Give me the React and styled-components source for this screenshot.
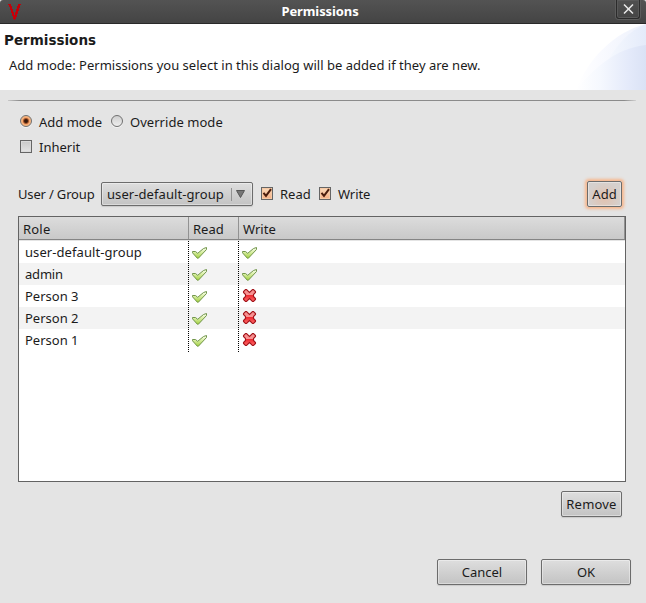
import React from "react";
import styled, { createGlobalStyle, css } from "styled-components";

const Global = createGlobalStyle`
  * { box-sizing: border-box; }
  body { margin: 0; overflow: hidden; background: #e4e4e4; }
  svg { display: block; }
`;

const Dialog = styled.main`
  width: 646px;
  height: 603px;
  display: flex;
  flex-direction: column;
  background: #e4e4e4;
  color: #1b1b1b;
  font: 13px/22px "Noto Sans", "Open Sans", sans-serif;
`;

const Text = styled.span`
  display: block;
  white-space: nowrap;
  letter-spacing: ${(p) => p.$track || 0}px;
`;

const TitleBar = styled.header`
  flex: none;
  height: 24px;
  display: grid;
  grid-template-columns: 32px 1fr 30px;
  background: linear-gradient(#535353, #444);
  border-bottom: 1px solid #292929;
  border-top-left-radius: 3px;
  border-top-right-radius: 3px;
`;

const Title = styled.h1`
  margin: 0;
  padding-right: 8px;
  text-align: center;
  color: #fff;
  font-size: 13px;
  line-height: 23px;
  letter-spacing: -0.1px;
`;

const CloseButton = styled.button`
  width: 24px;
  height: 19px;
  padding: 4px 0 0 6px;
  border: 1px solid #2b2b2b;
  border-top: 0;
  border-radius: 0 0 3px 3px;
  background: linear-gradient(#505050, #454545);
  box-shadow: 0 0 0 1px #5c5c5c, inset 0 0 0 1px #595959;
  display: flex;
  align-items: flex-start;
`;

const Banner = styled.section`
  flex: none;
  height: 66px;
  display: grid;
  grid-template-columns: 1fr 70px;
  background: #fff;
`;

const BannerCopy = styled.div`
  padding: 6px 0 0 4px;
`;

const Heading = styled.h2`
  margin: 0 0 5px;
  font: bold 13.5px/20px "DejaVu Sans", sans-serif;
`;

const Description = styled(Text)`
  margin-left: 5px;
  line-height: 20px;
`;

const Rule = styled.hr`
  flex: none;
  width: 628px;
  height: 1px;
  margin: 10px 8px 0;
  border: 0;
  background: linear-gradient(90deg, #c8c8c8, #8b8b8b 12px, #8b8b8b calc(100% - 12px), #d0d0d0);
`;

const Options = styled.section`
  flex: none;
  padding: 10px 0 0 20px;
  height: 80px;
`;

const OptionRow = styled.div`
  display: flex;
  height: 25px;
`;

const Option = styled.label`
  display: flex;
  align-items: center;
  height: 22px;
  width: ${(p) => p.$width}px;
  gap: 7px;
`;

const Radio = styled.i`
  flex: none;
  width: 12px;
  height: 12px;
  margin-top: -2px;
  border: 1px solid #707070;
  border-radius: 50%;
  background: ${(p) =>
    p.$on
      ? "radial-gradient(circle, #35180c 0 1.4px, #a5562c 2.5px, #f5a86f 3.5px, #f9c99d 6px)"
      : "linear-gradient(#cfcfcf, #eee)"};
  box-shadow: 0 1px 0 #f2f2f2;
`;

const Box = styled.i`
  flex: none;
  width: 12px;
  height: 13px;
  margin-top: -1px;
  border: 1px solid #656565;
  background: ${(p) => (p.$on ? "linear-gradient(#fbdcbc, #f6ad82)" : "linear-gradient(#c9c9c9, #e4e4e4)")};
  box-shadow: inset 0 0 0 1px ${(p) => (p.$on ? "#f6c9a5" : "#dadada")};
`;

const Controls = styled.section`
  flex: none;
  height: 26px;
  display: flex;
  align-items: center;
  padding: 0 24px 0 18px;
  margin-bottom: 9px;
`;

const FieldLabel = styled.div`
  width: 83px;
`;

const face = css`
  border: 1px solid #6c6c6c;
  border-radius: 2px;
  background: linear-gradient(#dedede, #c3c3c3);
  box-shadow: inset 0 0 0 1px rgba(255, 255, 255, 0.38), 0 1px 1px #c9c9c9;
`;

const Combo = styled.div`
  ${face}
  width: 152px;
  height: 24px;
  display: flex;
  align-items: center;
  padding-left: 5px;
  margin-right: 8px;
`;

const ComboValue = styled.div`
  width: 124px;
`;

const ComboArrow = styled.div`
  height: 13px;
  padding: 2px 0 0 4px;
  border-left: 1px solid #929292;
`;

const Button = styled.button`
  ${face}
  width: ${(p) => p.$width}px;
  height: 26px;
  padding: 0;
  color: inherit;
  font: inherit;
  display: flex;
  justify-content: center;
  align-items: center;
  ${(p) =>
    p.$focused &&
    css`
      background: radial-gradient(ellipse at 50% 65%, #e2c1ae, #d5d0cd 70%);
      box-shadow: inset 0 0 0 1px rgba(255, 255, 255, 0.38), 0 0 3px 2px #f7b68c;
      margin-left: auto;
    `}
`;

const Table = styled.section`
  flex: none;
  width: 608px;
  height: 266px;
  margin-left: 18px;
  border: 1px solid #636363;
  background: #fff;
`;

const HeadRow = styled.div`
  display: grid;
  grid-template-columns: 170px 50px 1fr;
  height: 23px;
  margin-bottom: 1px;
  border-bottom: 1px solid #858585;
  background: linear-gradient(#dcdcdc, #c9c9c9);
  box-shadow: 0 1px 0 #e4e4e4;
`;

const HeadCell = styled.div`
  height: 22px;
  padding-left: 4px;
  line-height: 24px;
  border-right: 1px solid #929292;
`;

const columnDots = css`
  background: repeating-linear-gradient(#000 0 1px, transparent 1px 2px) right / 1px 100% no-repeat;
`;

const Row = styled.div`
  display: grid;
  grid-template-columns: 170px 50px 1fr;
  height: ${(p) => p.$height || 22}px;
  background: ${(p) => (p.$shade ? "#f3f3f3" : "#fff")};
`;

const Cell = styled.div`
  padding-left: ${(p) => (p.$name ? 6 : 3)}px;
  ${(p) => !p.$last && columnDots}
`;

const RemoveBar = styled.div`
  display: flex;
  justify-content: flex-end;
  padding: 9px 24px 0 0;
`;

const Footer = styled.footer`
  display: flex;
  justify-content: flex-end;
  gap: 14px;
  padding: 42px 15px 0 0;
`;

const Logo = () => (
  <svg width="22" height="23" viewBox="0 0 22 23" shapeRendering="crispEdges">
    <path d="M7 4h4v2h1v3h1v3h1v3h1v-3h1v-3h1v-3h1v-2h3v1h-1v3h-1v3h-1v3h-1v3h-1v2h-1v1h-1v-1h-1v-3h-1v-3h-1v-3h-1v-3h-1v-2h-1z" fill="#c40009" />
  </svg>
);

const CloseGlyph = () => (
  <svg width="11" height="11" viewBox="0 0 11 11">
    <path d="M1 .5l9 9M10 .5l-9 9" stroke="#e9e9e9" strokeWidth="1.5" />
  </svg>
);

const Swoosh = () => (
  <svg width="70" height="66" viewBox="0 0 70 66">
    <defs>
      <linearGradient id="outer">
        <stop offset="0" stopColor="#fff" />
        <stop offset=".3" stopColor="#fafbff" />
        <stop offset="1" stopColor="#edf1fc" />
      </linearGradient>
      <linearGradient id="crest">
        <stop offset="0" stopColor="#f5f8fe" />
        <stop offset="1" stopColor="#e4ebfa" />
      </linearGradient>
      <linearGradient id="inner">
        <stop offset="0" stopColor="#fff" />
        <stop offset=".35" stopColor="#f5f8fe" />
        <stop offset=".75" stopColor="#e4eafa" />
        <stop offset="1" stopColor="#dae2f5" />
      </linearGradient>
    </defs>
    <path d="M0 66C12 35 38 8 70 0V66z" fill="url(#outer)" />
    <path d="M32 37C41 20 53 7 70 0V28z" fill="url(#crest)" />
    <path d="M0 66C18 44 40 24 70 21V66z" fill="url(#inner)" />
  </svg>
);

const Tick = () => (
  <svg width="10" height="10" viewBox="0 0 10 10">
    <path d="M1.5 4.8L4 7.8 9 1.2" fill="none" stroke="#4b1d0d" strokeWidth="2" />
  </svg>
);

const Arrow = () => (
  <svg width="9" height="8" viewBox="0 0 9 8">
    <path d="M.5.5h8L4.5 7.5z" fill="#777" stroke="#565656" />
  </svg>
);

const Yes = () => (
  <svg width="16" height="19" viewBox="0 0 16 19">
    <defs>
      <linearGradient id="leaf" x2="0" y2="1">
        <stop stopColor="#fafdf2" />
        <stop offset=".4" stopColor="#dcf0ab" />
        <stop offset="1" stopColor="#a1d03d" />
      </linearGradient>
    </defs>
    <path d="M.5 10.5H3.5L5.7 12.3 11.5 7.5 14.5 6.5V8.5L6.4 17.2H5.3L.5 11.8z" fill="url(#leaf)" stroke="#71954a" />
  </svg>
);

const No = () => (
  <svg width="15" height="18" viewBox="0 0 15 18">
    <defs>
      <linearGradient id="ember" x2="0" y2="1">
        <stop stopColor="#f48d8d" />
        <stop offset=".46" stopColor="#fa9494" />
        <stop offset=".5" stopColor="#ee2c32" />
        <stop offset="1" stopColor="#ff6b6b" />
      </linearGradient>
    </defs>
    <path d="M3.5 4.5h1l3 3 3-3h1l2 2v1l-2 2v2l2 2v1l-2 2h-1l-3-3-3 3h-1l-2-2v-1l2-2v-2l-2-2v-1z" fill="url(#ember)" stroke="#a3161c" strokeWidth="1.1" />
  </svg>
);

const roles = [
  { name: "user-default-group", read: true, write: true, track: 0.08 },
  { name: "admin", read: true, write: true, track: -0.2 },
  { name: "Person 3", read: true, write: false, track: 0 },
  { name: "Person 2", read: true, write: false, track: 0 },
  { name: "Person 1", read: true, write: false, track: 0 },
];

export default function App() {
  return (
    <>
      <Global />
      <Dialog>
        <TitleBar>
          <Logo />
          <Title>Permissions</Title>
          <CloseButton aria-label="Close"><CloseGlyph /></CloseButton>
        </TitleBar>
        <Banner>
          <BannerCopy>
            <Heading>Permissions</Heading>
            <Description $track={0.016}>Add mode: Permissions you select in this dialog will be added if they are new.</Description>
          </BannerCopy>
          <Swoosh />
        </Banner>
        <Rule />
        <Options>
          <OptionRow>
            <Option $width={91}><Radio $on /><Text>Add mode</Text></Option>
            <Option><Radio /><Text $track={0.04}>Override mode</Text></Option>
          </OptionRow>
          <OptionRow>
            <Option><Box /><Text>Inherit</Text></Option>
          </OptionRow>
        </Options>
        <Controls>
          <FieldLabel><Text $track={-0.17}>User / Group</Text></FieldLabel>
          <Combo>
            <ComboValue><Text $track={0.08}>user-default-group</Text></ComboValue>
            <ComboArrow><Arrow /></ComboArrow>
          </Combo>
          <Option $width={58}><Box $on><Tick /></Box><Text>Read</Text></Option>
          <Option><Box $on><Tick /></Box><Text $track={-0.1}>Write</Text></Option>
          <Button $width={35} $focused><Text>Add</Text></Button>
        </Controls>
        <Table>
          <HeadRow>
            <HeadCell><Text $track={0.2}>Role</Text></HeadCell>
            <HeadCell><Text>Read</Text></HeadCell>
            <HeadCell><Text>Write</Text></HeadCell>
          </HeadRow>
          {roles.map((r, i) => (
            <Row key={r.name} $shade={i % 2 === 1}>
              <Cell $name><Text $track={r.track}>{r.name}</Text></Cell>
              <Cell>{r.read ? <Yes /> : <No />}</Cell>
              <Cell $last>{r.write ? <Yes /> : <No />}</Cell>
            </Row>
          ))}
          <Row $height={1}>
            <Cell />
            <Cell />
            <Cell $last />
          </Row>
        </Table>
        <RemoveBar><Button $width={61}><Text $track={0.2}>Remove</Text></Button></RemoveBar>
        <Footer>
          <Button $width={90}><Text>Cancel</Text></Button>
          <Button $width={90}><Text>OK</Text></Button>
        </Footer>
      </Dialog>
    </>
  );
}
